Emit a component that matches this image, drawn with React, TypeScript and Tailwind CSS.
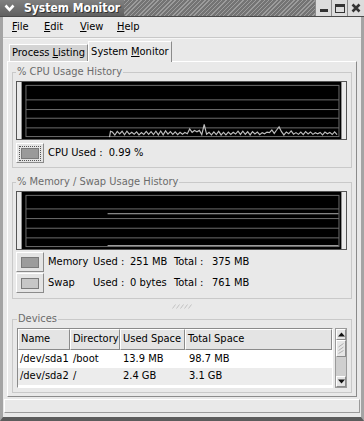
import React from 'react';

// deterministic noise for the cpu history line
function cpuLine(): string {
    let seed = 11;
    const rnd = () => {
        seed = (seed * 9301 + 49297) % 233280;
        return seed / 233280;
    };
    const pts: string[] = ['91,57', '92,51'];
    let i = 0;
    for (let x = 94; x <= 328; x += 2.5) {
        let y = i % 2 === 0 ? 50.5 + rnd() * 2 : 53.5 + rnd() * 1.5;
        if (x > 172 && x < 186) y -= 2;
        if (Math.abs(x - 189) < 1.3) y = 44;
        if (Math.abs(x - 267) < 1.3) y = 46.5;
        if (x > 255 && x < 266) y -= 1.5;
        pts.push(`${x.toFixed(1)},${y.toFixed(1)}`);
        i++;
    }
    return pts.join(' ');
}

const Graph: React.FC<{ lines: number[]; children?: React.ReactNode }> = ({ lines, children }) => (
    <svg width="331" height="59" viewBox="0 0 331 59" className="block border border-[#555]">
        <rect x="0" y="0" width="331" height="59" fill="#000" />
        <rect x="4.5" y="3.5" width="324" height="53" fill="none" stroke="#707070" strokeWidth="1" />
        {lines.map((y) => (
            <line key={y} x1="4.5" x2="328.5" y1={y + 0.5} y2={y + 0.5} stroke="#707070" strokeWidth="1" />
        ))}
        {children}
    </svg>
);

const Swatch: React.FC<{ color: string; focus?: boolean }> = ({ color, focus }) => (
    <div className="w-[28px] h-[20px] bg-[#e4e4e4] border border-t-white border-l-white border-r-[#8b8b8b] border-b-[#8b8b8b] flex items-center justify-center shrink-0">
        <div className={'p-[1px] ' + (focus ? 'border border-dotted border-[#555]' : 'border border-transparent')}>
            <div className="w-[18px] h-[11px] border border-[#7a7a7a]" style={{ background: color }} />
        </div>
    </div>
);

const Arrow: React.FC<{ up?: boolean }> = ({ up }) => (
    <svg width="7" height="5" viewBox="0 0 7 5">
        <polygon points={up ? '3.5,0.5 7,4.5 0,4.5' : '0,0.5 7,0.5 3.5,4.5'} fill="#111" />
    </svg>
);

const Frame: React.FC<{ title: string; className?: string; children: React.ReactNode }> = ({ title, className, children }) => (
    <fieldset className={'border border-[#c9c9c9] px-[3px] ' + (className ?? '')}>
        <legend className="px-[1px] leading-[12px] text-[#6b6b6b]">{title}</legend>
        {children}
    </fieldset>
);

export default function App() {
    return (
        <div className="w-[364px] h-[421px] bg-[#e9e9e9] flex flex-col overflow-hidden text-[11px] text-black font-['DejaVu_Sans_Condensed','DejaVu_Sans',sans-serif]">
            {/* title bar */}
            <div className="h-[17px] flex shrink-0 bg-[linear-gradient(to_bottom,#808080,#606060)] border-b border-[#4a4a4a]">
                <div className="w-[18px] flex items-center justify-center">
                    <svg width="11" height="8" viewBox="0 0 11 8">
                        <polyline points="1.5,1.5 5.5,5.8 9.5,1.5" fill="none" stroke="#fff" strokeWidth="2.6" />
                    </svg>
                </div>
                <div className="pl-[6px] flex items-center text-white font-bold text-[12px] [text-shadow:1px_1px_0_#333]">System Monitor</div>
                <div className="flex-1 ml-[4px] bg-[repeating-linear-gradient(135deg,#9c9c9c_0px,#9c9c9c_1px,#747474_1px,#747474_3px)]" />
                <div className="flex bg-[#dcdcdc]">
                    <div className="w-[16px] border-l border-[#8b8b8b] flex items-end justify-center pb-[4px]">
                        <div className="w-[8px] h-[3px] bg-[#333]" />
                    </div>
                    <div className="w-[16px] border-l border-[#8b8b8b] flex items-center justify-center">
                        <div className="w-[10px] h-[9px] border border-[#333] border-t-[3px]" />
                    </div>
                    <div className="w-[17px] border-l border-[#8b8b8b] flex items-center justify-center">
                        <svg width="10" height="10" viewBox="0 0 10 10">
                            <path d="M1.5 1.5 L8.5 8.5 M8.5 1.5 L1.5 8.5" stroke="#333" strokeWidth="2.6" />
                        </svg>
                    </div>
                </div>
            </div>

            <div className="flex-1 flex flex-col border-x-[3px] border-b-[4px] border-x-[#a4a4a4] border-b-[#5c5c5c]">
                {/* menu bar */}
                <div className="h-[20px] flex items-center pl-[9px] shrink-0">
                    <span className="w-[32px]"><span className="underline">F</span>ile</span>
                    <span className="w-[36px]"><span className="underline">E</span>dit</span>
                    <span className="w-[37px]"><span className="underline">V</span>iew</span>
                    <span><span className="underline">H</span>elp</span>
                </div>
                <div className="h-[2px] border-t border-[#c8c8c8] bg-white/60 shrink-0" />

                {/* tabs */}
                <div className="flex items-end h-[21px] ml-[6px] mt-[1px] shrink-0">
                    <div className="h-[17px] px-[2px] flex items-center bg-[#d4d4d4] border-t border-l border-white border-r border-r-[#8b8b8b]">
                        Process <span className="underline ml-[3px]">L</span>isting
                    </div>
                    <div className="h-[21px] px-[2px] flex items-center bg-[#e9e9e9] border-t border-l border-white border-r border-r-[#8b8b8b] -mb-px relative z-10">
                        System <span className="underline ml-[3px]">M</span>onitor
                    </div>
                </div>

                {/* notebook */}
                <div className="flex-1 mx-[4px] border border-t-white border-l-white border-r-[#8b8b8b] border-b-[#8b8b8b] px-[4px] pt-[4px] flex flex-col">
                    <Frame title="% CPU Usage History" className="pb-[4px]">
                        <div className="pt-[3px]">
                            <Graph lines={[18, 28, 37, 47]}>
                                <polyline points={cpuLine()} fill="none" stroke="#bdbdbd" strokeWidth="1.2" />
                            </Graph>
                        </div>
                        <div className="mt-[3px] h-[20px] flex items-center">
                            <Swatch color="#9a9a9a" focus />
                            <span className="ml-[4px] whitespace-pre">CPU Used :  0.99 %</span>
                        </div>
                    </Frame>

                    <Frame title="% Memory / Swap Usage History" className="mt-[8px] pb-[5px]">
                        <div className="pt-[3px]">
                            <Graph lines={[17, 27, 37, 47]}>
                                <line x1="89" x2="328" y1="22.5" y2="22.5" stroke="#b4b4b4" strokeWidth="1" />
                                <line x1="89" x2="328" y1="55.5" y2="55.5" stroke="#b4b4b4" strokeWidth="1" />
                            </Graph>
                        </div>
                        <div className="mt-[2px] h-[20px] flex items-center whitespace-pre">
                            <Swatch color="#9c9c9c" />
                            <span className="ml-[4px] w-[45px]">Memory</span>
                            <span className="w-[37px]">Used :</span>
                            <span className="w-[44px]">251 MB</span>
                            <span className="w-[38px]">Total :</span>
                            <span>375 MB</span>
                        </div>
                        <div className="mt-[1px] h-[20px] flex items-center whitespace-pre">
                            <Swatch color="#c6c6c6" />
                            <span className="ml-[4px] w-[45px]">Swap</span>
                            <span className="w-[37px]">Used :</span>
                            <span className="w-[44px]">0 bytes</span>
                            <span className="w-[38px]">Total :</span>
                            <span>761 MB</span>
                        </div>
                    </Frame>

                    {/* pane grip */}
                    <div className="h-[14px] flex items-center justify-center">
                        <svg width="20" height="5" viewBox="0 0 20 5">
                            {[0, 4, 8, 12, 16].map((x) => (
                                <path key={x} d={`M${x + 0.5} 4.5 L${x + 3.5} 0.5`} stroke="#c2c2c2" strokeWidth="1" />
                            ))}
                        </svg>
                    </div>

                    <Frame title="Devices" className="pb-[4px] px-[4px]">
                        <div className="pt-[3px] flex gap-[2px]">
                            <div className="flex-1 h-[60px] bg-white border border-t-[#8b8b8b] border-l-[#8b8b8b] border-r-white border-b-white">
                                <div className="grid grid-cols-[52px_50px_65px_1fr] h-[21px]">
                                    {['Name', 'Directory', 'Used Space', 'Total Space'].map((h) => (
                                        <div key={h} className="bg-[#e4e4e4] border border-t-white border-l-white border-r-[#8b8b8b] border-b-[#8b8b8b] flex items-center pl-[2px] whitespace-nowrap overflow-hidden">
                                            {h}
                                        </div>
                                    ))}
                                </div>
                                <div className="grid grid-cols-[52px_50px_65px_1fr] h-[18px] items-center">
                                    <span className="pl-[2px]">/dev/sda1</span>
                                    <span className="pl-[3px]">/boot</span>
                                    <span className="pl-[3px]">13.9 MB</span>
                                    <span className="pl-[4px]">98.7 MB</span>
                                </div>
                                <div className="grid grid-cols-[52px_50px_65px_1fr] h-[17px] items-center bg-[#ececec]">
                                    <span className="pl-[2px]">/dev/sda2</span>
                                    <span className="pl-[3px]">/</span>
                                    <span className="pl-[3px]">2.4 GB</span>
                                    <span className="pl-[4px]">3.1 GB</span>
                                </div>
                            </div>
                            <div className="w-[12px] h-[60px] flex flex-col bg-[#cfcfcf] border border-[#9a9a9a]">
                                <div className="h-[11px] bg-[#e4e4e4] border border-t-white border-l-white border-r-[#8b8b8b] border-b-[#8b8b8b] flex items-center justify-center">
                                    <Arrow up />
                                </div>
                                <div className="h-[17px] bg-[#e6e6e6] border border-t-white border-l-white border-r-[#8b8b8b] border-b-[#8b8b8b] flex items-center justify-center">
                                    <svg width="6" height="11" viewBox="0 0 6 11">
                                        <path d="M0.5 4 L5.5 0.5 M0.5 7.5 L5.5 4 M0.5 10.5 L5.5 7.5" stroke="#b0b0b0" strokeWidth="1" />
                                    </svg>
                                </div>
                                <div className="flex-1" />
                                <div className="h-[11px] bg-[#e4e4e4] border border-t-white border-l-white border-r-[#8b8b8b] border-b-[#8b8b8b] flex items-center justify-center">
                                    <Arrow />
                                </div>
                            </div>
                        </div>
                    </Frame>
                </div>

                {/* status area */}
                <div className="h-[14px] mt-[2px] mb-[4px] mx-[1px] border border-t-white border-l-white border-r-[#9a9a9a] border-b-[#9a9a9a] shrink-0" />
            </div>
        </div>
    );
}
